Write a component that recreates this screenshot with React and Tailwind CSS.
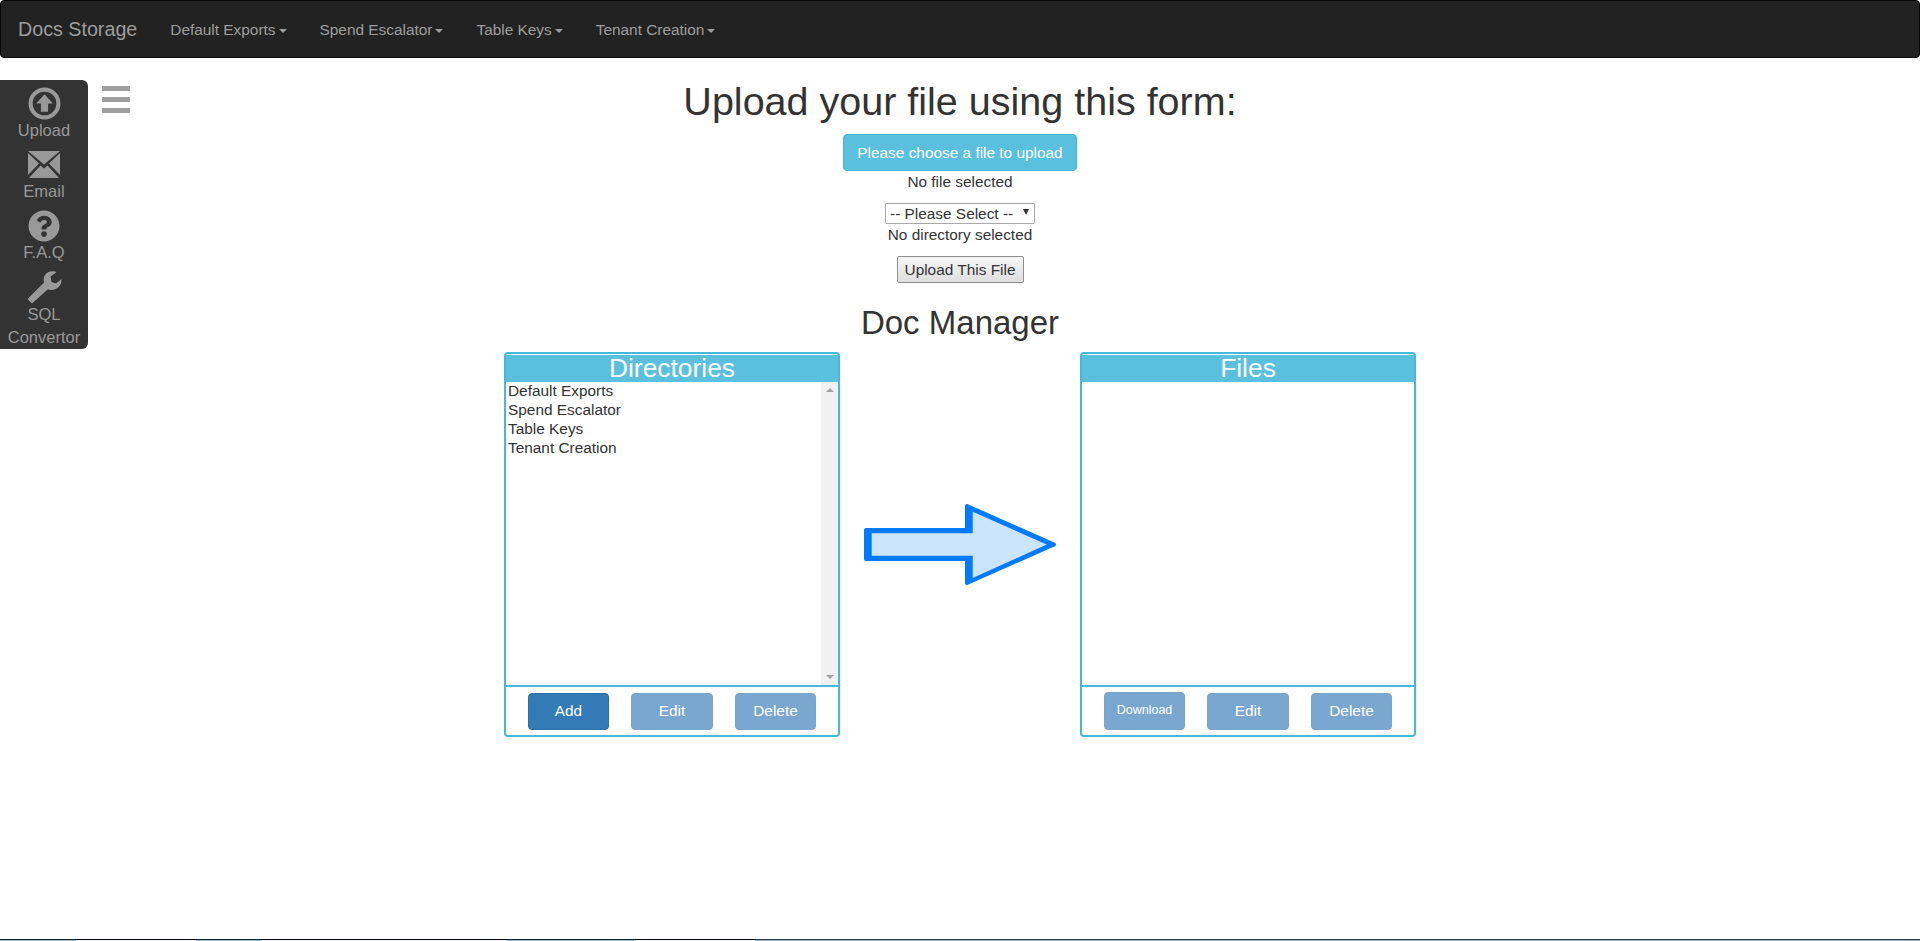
import { FaQuestionCircle } from 'react-icons/fa';

const navItems = ['Default Exports', 'Spend Escalator', 'Table Keys', 'Tenant Creation'];

// bottom edge of the desktop taskbar that is peeking in
const taskbar = [
  { w: 'w-[76px]', line: 'bg-[#14222c]', fill: 'bg-[#8cc3e0]' },
  { w: 'w-[120px]', line: 'bg-[#0a0a0a]', fill: 'bg-[#e3f0f5]' },
  { w: 'w-[66px]', line: 'bg-[#14222c]', fill: 'bg-[#8cc3e0]' },
  { w: 'w-[244px]', line: 'bg-[#0a0a0a]', fill: 'bg-[#e3f0f5]' },
  { w: 'w-[128px]', line: 'bg-[#14222c]', fill: 'bg-[#8cc3e0]' },
  { w: 'w-[121px]', line: 'bg-[#0a0a0a]', fill: 'bg-[#e3f0f5]' },
  { w: 'flex-1', line: 'bg-[#2c3e4c]', fill: 'bg-[#8ab8d6]' },
  { w: 'w-[16px]', line: 'bg-[#2c3e4c]', fill: 'bg-[#9aa8b4]' },
];

function Caret() {
  return <span className="ml-[3px] inline-block h-0 w-0 border-x-[4px] border-t-[4px] border-x-transparent border-t-[#9d9d9d] align-middle" />;
}

function UploadIcon() {
  return (
    <svg viewBox="0 0 32 32" className="h-[33px] w-[33px]">
      <circle cx="16" cy="16" r="13.5" fill="none" stroke="#999" strokeWidth="4" />
      <path d="M16 7 L24 16 H19.5 V24 H12.5 V16 H8 Z" fill="#999" />
    </svg>
  );
}

function MailIcon() {
  return (
    <svg viewBox="0 0 32 27" className="h-[27px] w-[32px]">
      <path d="M0 0 H32 L16 13.5 Z" fill="#999" />
      <path d="M0 2 L11 12.5 L0 24 Z M32 2 L21 12.5 L32 24 Z" fill="#999" />
      <path d="M1 27 L12.5 14.5 L16 17.5 L19.5 14.5 L31 27 Z" fill="#999" />
    </svg>
  );
}

function WrenchIcon() {
  return (
    <svg viewBox="0 0 35 33" className="mt-[7px] h-[33px] w-[35px]">
      <path
        d="M0.5 28 L17 11.5 C15.5 6 19 0.5 25 0.3 C27 0.2 28.5 0.7 29.5 1.2 L23.5 5.5 L24.5 11 L29 12.5 L34.5 8 C35 14 30 19.5 24 19 C23 19 22 18.8 21 18.3 L5 32.5 Z"
        fill="#999"
      />
    </svg>
  );
}

function SideItem({ icon, children }) {
  return (
    <div className="flex flex-col items-center text-center text-[16.5px] leading-[23px] text-[#999]">
      {icon}
      {children}
    </div>
  );
}

function Sidebar() {
  return (
    <div className="h-[269px] w-[88px] rounded-r-[6px] bg-[#333] pt-[7px]">
      <SideItem icon={<UploadIcon />}><span className="-mt-[1px]">Upload</span></SideItem>
      <SideItem icon={<div className="mt-[9px] h-[27px]"><MailIcon /></div>}><span className="mt-[2px]">Email</span></SideItem>
      <SideItem icon={<FaQuestionCircle className="mt-[7px] h-[32px] w-[32px]" />}><span className="-mt-[1px]">F.A.Q</span></SideItem>
      <SideItem icon={<WrenchIcon />}>
        <span className="-mt-[1px]">SQL</span>
        <span>Convertor</span>
      </SideItem>
    </div>
  );
}

function Scrollbar() {
  return (
    <div className="flex w-[17px] flex-col items-center justify-between bg-[#f1f1f1] py-[6px]">
      <span className="h-0 w-0 border-x-[4px] border-b-[4px] border-x-transparent border-b-[#a3a3a3]" />
      <span className="h-0 w-0 border-x-[4px] border-t-[4px] border-x-transparent border-t-[#a3a3a3]" />
    </div>
  );
}

function PanelButton({ active, small, wide, children }) {
  return (
    <button
      className={`${small ? 'h-[38px] pb-[2px] text-[12.5px]' : 'h-[37px] text-[15.4px]'} ${wide ? 'w-[82px]' : 'w-[81px]'} rounded-[4px] border text-white ${
        active ? 'border-[#2e6da4] bg-[#337ab7]' : 'border-[#7ba4cb] bg-[#7aa7cf]'
      }`}
    >
      {children}
    </button>
  );
}

function Panel({ title, scroll, children, buttons }) {
  return (
    <div className="flex h-[385px] w-[336px] flex-col rounded-[4px] border-2 border-[#46b8da] bg-white">
      <div className="mt-[1px] h-[27px] bg-[#5bc0de] text-center text-[26.4px] leading-[27px] text-white">{title}</div>
      <div className="flex h-[305px] border-b-2 border-[#46b8da]">
        <div className="-mt-[1px] flex-1 pl-[2px] text-[15.4px] leading-[19px] text-[#333]">{children}</div>
        {scroll && <Scrollbar />}
      </div>
      <div className="flex flex-1 items-center justify-between px-[22px]">{buttons}</div>
    </div>
  );
}

export default function App() {
  return (
    <div className="flex h-[941px] flex-col overflow-hidden bg-white font-['Liberation_Sans',Arial,sans-serif] text-[15.4px] text-[#333]">
      {/* Navbar */}
      <nav className="flex h-[58px] shrink-0 items-center rounded-[4px] border border-[#080808] bg-[#222]">
        <a className="ml-[17px] pt-[1px] text-[19.7px] text-[#9d9d9d]">Docs Storage</a>
        <ul className="ml-[33px] flex gap-[33px] pt-[1px] text-[15.4px] text-[#9d9d9d]">
          {navItems.map((item) => (
            <li key={item}>{item}<Caret /></li>
          ))}
        </ul>
      </nav>

      {/* Body */}
      <div className="mt-[22px] grid flex-1 grid-cols-[1fr_auto_1fr] items-start">
        <div className="flex items-start">
          <Sidebar />
          <div className="ml-[14px] mt-[6px] flex w-[28px] flex-col gap-[6px]">
            <span className="h-[5px] bg-[#9f9f9f]" />
            <span className="h-[5px] bg-[#9f9f9f]" />
            <span className="h-[5px] bg-[#9f9f9f]" />
          </div>
        </div>

        <main className="flex flex-col items-center">
          <h1 className="text-[39.5px] leading-[43px] text-[#333]">Upload your file using this form:</h1>
          <button className="mt-[11px] h-[37px] w-[234px] rounded-[4px] border border-[#46b8da] bg-[#5bc0de] text-white">
            Please choose a file to upload
          </button>
          <p className="mt-[1px] leading-[20px]">No file selected</p>
          <div className="mt-[11px] flex h-[21px] w-[150px] items-center justify-between rounded-[1px] border border-[#a9a9a9] pl-[4px] pr-[5px]">
            <span>-- Please Select --</span>
            <span className="mb-[3px] h-0 w-0 border-x-[3px] border-t-[6px] border-x-transparent border-t-[#333]" />
          </div>
          <p className="mt-[1px] leading-[20px]">No directory selected</p>
          <button className="mt-[11px] h-[27px] w-[127px] rounded-[2px] border border-[#8f8f8f] bg-gradient-to-b from-[#f6f6f6] to-[#dedede]">
            Upload This File
          </button>
          <h2 className="mt-[22px] text-[33px] leading-[36px]">Doc Manager</h2>

          <div className="mt-[11px] grid grid-cols-[336px_240px_336px] items-center">
            <Panel
              title="Directories"
              scroll
              buttons={
                <>
                  <PanelButton active>Add</PanelButton>
                  <PanelButton wide>Edit</PanelButton>
                  <PanelButton>Delete</PanelButton>
                </>
              }
            >
              {navItems.map((item) => (
                <div key={item}>{item}</div>
              ))}
            </Panel>

            <svg viewBox="0 0 200 84" className="mx-auto h-[84px] w-[200px]">
              <path
                d="M6 27 H107 V3 L194 41.5 L107 80 V56 H6 Z"
                fill="#007bff"
                stroke="#007bff"
                strokeWidth="4"
                strokeLinejoin="round"
              />
              <path d="M11.7 30.3 H112.7 V8.7 L186.7 41.5 L112.7 75 V52.7 H11.7 Z" fill="#cce5ff" />
            </svg>

            <Panel
              title="Files"
              buttons={
                <>
                  <PanelButton small>Download</PanelButton>
                  <PanelButton wide>Edit</PanelButton>
                  <PanelButton>Delete</PanelButton>
                </>
              }
            />
          </div>
        </main>
        <div />
      </div>

      {/* Taskbar edge */}
      <div className="flex h-[2px] shrink-0">
        {taskbar.map((seg, i) => (
          <div key={i} className={seg.w}>
            <div className={`h-[1px] ${seg.line}`} />
            <div className={`h-[1px] ${seg.fill}`} />
          </div>
        ))}
      </div>
    </div>
  );
}
